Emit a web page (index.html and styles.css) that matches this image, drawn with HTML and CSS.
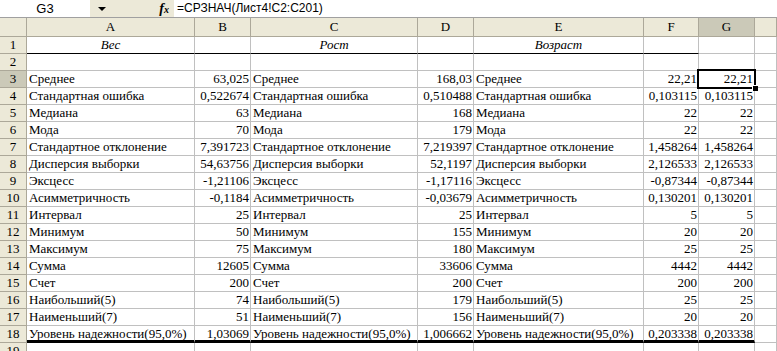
FILE: index.html
```html
<!DOCTYPE html>
<html lang="ru">
<head>
<meta charset="utf-8">
<title>Лист</title>
<link rel="stylesheet" href="styles.css">
</head>
<body>
<div class="fbar">
  <div class="namebox">G3</div>
  <div class="ddbtn"><span class="arrow"></span></div>
  <div class="fxzone"><span class="fx">f<span class="fxx">x</span></span></div>
  <div class="formula">=СРЗНАЧ(Лист4!C2:C201)</div>
</div>
<div class="sheet">
  <div class="corner"></div><div class="ch">A</div><div class="ch">B</div><div class="ch">C</div><div class="ch">D</div><div class="ch">E</div><div class="ch">F</div><div class="ch csel">G</div><div class="ch"></div>

  <div class="rh">1</div><div class="c i b1">Вес</div><div class="c b1"></div><div class="c i b1">Рост</div><div class="c b1"></div><div class="c i b1">Возраст</div><div class="c b1"></div><div class="c"></div><div class="c"></div>

  <div class="rh">2</div><div class="c"></div><div class="c"></div><div class="c"></div><div class="c"></div><div class="c"></div><div class="c"></div><div class="c"></div><div class="c"></div>

  <div class="rh rsel">3</div><div class="c">Среднее</div><div class="c n">63,025</div><div class="c">Среднее</div><div class="c n">168,03</div><div class="c">Среднее</div><div class="c n">22,21</div><div class="c n sel">22,21</div><div class="c"></div>

  <div class="rh">4</div><div class="c">Стандартная ошибка</div><div class="c n">0,522674</div><div class="c">Стандартная ошибка</div><div class="c n">0,510488</div><div class="c">Стандартная ошибка</div><div class="c n">0,103115</div><div class="c n">0,103115</div><div class="c"></div>

  <div class="rh">5</div><div class="c">Медиана</div><div class="c n">63</div><div class="c">Медиана</div><div class="c n">168</div><div class="c">Медиана</div><div class="c n">22</div><div class="c n">22</div><div class="c"></div>

  <div class="rh">6</div><div class="c">Мода</div><div class="c n">70</div><div class="c">Мода</div><div class="c n">179</div><div class="c">Мода</div><div class="c n">22</div><div class="c n">22</div><div class="c"></div>

  <div class="rh">7</div><div class="c">Стандартное отклонение</div><div class="c n">7,391723</div><div class="c">Стандартное отклонение</div><div class="c n">7,219397</div><div class="c">Стандартное отклонение</div><div class="c n">1,458264</div><div class="c n">1,458264</div><div class="c"></div>

  <div class="rh">8</div><div class="c">Дисперсия выборки</div><div class="c n">54,63756</div><div class="c">Дисперсия выборки</div><div class="c n">52,1197</div><div class="c">Дисперсия выборки</div><div class="c n">2,126533</div><div class="c n">2,126533</div><div class="c"></div>

  <div class="rh">9</div><div class="c">Эксцесс</div><div class="c n">-1,21106</div><div class="c">Эксцесс</div><div class="c n">-1,17116</div><div class="c">Эксцесс</div><div class="c n">-0,87344</div><div class="c n">-0,87344</div><div class="c"></div>

  <div class="rh">10</div><div class="c">Асимметричность</div><div class="c n">-0,1184</div><div class="c">Асимметричность</div><div class="c n">-0,03679</div><div class="c">Асимметричность</div><div class="c n">0,130201</div><div class="c n">0,130201</div><div class="c"></div>

  <div class="rh">11</div><div class="c">Интервал</div><div class="c n">25</div><div class="c">Интервал</div><div class="c n">25</div><div class="c">Интервал</div><div class="c n">5</div><div class="c n">5</div><div class="c"></div>

  <div class="rh">12</div><div class="c">Минимум</div><div class="c n">50</div><div class="c">Минимум</div><div class="c n">155</div><div class="c">Минимум</div><div class="c n">20</div><div class="c n">20</div><div class="c"></div>

  <div class="rh">13</div><div class="c">Максимум</div><div class="c n">75</div><div class="c">Максимум</div><div class="c n">180</div><div class="c">Максимум</div><div class="c n">25</div><div class="c n">25</div><div class="c"></div>

  <div class="rh">14</div><div class="c">Сумма</div><div class="c n">12605</div><div class="c">Сумма</div><div class="c n">33606</div><div class="c">Сумма</div><div class="c n">4442</div><div class="c n">4442</div><div class="c"></div>

  <div class="rh">15</div><div class="c">Счет</div><div class="c n">200</div><div class="c">Счет</div><div class="c n">200</div><div class="c">Счет</div><div class="c n">200</div><div class="c n">200</div><div class="c"></div>

  <div class="rh">16</div><div class="c">Наибольший(5)</div><div class="c n">74</div><div class="c">Наибольший(5)</div><div class="c n">179</div><div class="c">Наибольший(5)</div><div class="c n">25</div><div class="c n">25</div><div class="c"></div>

  <div class="rh">17</div><div class="c">Наименьший(7)</div><div class="c n">51</div><div class="c">Наименьший(7)</div><div class="c n">156</div><div class="c">Наименьший(7)</div><div class="c n">20</div><div class="c n">20</div><div class="c"></div>

  <div class="rh">18</div><div class="c b3">Уровень надежности(95,0%)</div><div class="c n b3">1,03069</div><div class="c b3">Уровень надежности(95,0%)</div><div class="c n b3">1,006662</div><div class="c b3">Уровень надежности(95,0%)</div><div class="c n b3">0,203338</div><div class="c n b3">0,203338</div><div class="c"></div>

  <div class="rh">19</div><div class="c"></div><div class="c"></div><div class="c"></div><div class="c"></div><div class="c"></div><div class="c"></div><div class="c"></div><div class="c"></div>
</div>
</body>
</html>
```
FILE: styles.css
```css
html, body {
  margin: 0;
  padding: 0;
  background: #ffffff;
  overflow: hidden;
}
body {
  width: 777px;
  height: 351px;
}
.fbar {
  display: flex;
  height: 17px;
  border-bottom: 1px solid #a0a0a0;
  font-family: "Liberation Sans", Arial, sans-serif;
  font-size: 13px;
  line-height: 17px;
  color: #000;
}
.namebox {
  width: 90px;
  text-align: center;
  background: #fff;
}
.ddbtn {
  width: 24px;
  background: #ece9d8;
  display: flex;
  align-items: center;
  justify-content: center;
}
.arrow {
  width: 0;
  height: 0;
  border-left: 4px solid transparent;
  border-right: 4px solid transparent;
  border-top: 4px solid #000;
  margin-top: 1px;
}
.fxzone {
  width: 55px;
  background: #ece9d8;
  display: flex;
  justify-content: flex-end;
  padding-right: 5px;
}
.fx {
  font-family: "Liberation Serif", "Times New Roman", serif;
  font-style: italic;
  font-weight: bold;
  font-size: 14px;
}
.fxx {
  font-size: 10px;
}
.formula {
  flex: 1;
  padding-left: 3px;
  background: #fff;
  white-space: nowrap;
  font-size: 12px;
}
.sheet {
  display: grid;
  grid-template-columns: 27px 168px 56px 167px 56px 170px 55px 56px 1fr;
  grid-template-rows: 19px;
  grid-auto-rows: 17px;
  font-family: "Liberation Serif", "Times New Roman", serif;
  font-size: 13px;
  line-height: 16px;
  color: #000;
}
.corner, .ch, .rh {
  background: #ece9d8;
  box-sizing: border-box;
  border-right: 1px solid #aca899;
  border-bottom: 1px solid #aca899;
  text-align: center;
  white-space: nowrap;
  overflow: hidden;
}
.ch {
  line-height: 18px;
}
.csel, .rsel {
  background: #cbc9b8;
}
.c {
  box-sizing: border-box;
  border-right: 1px solid #c0c0c0;
  border-bottom: 1px solid #c0c0c0;
  padding: 0 2px;
  white-space: nowrap;
  overflow: hidden;
}
.n {
  text-align: right;
  padding-right: 1px;
}
.i {
  font-style: italic;
  text-align: center;
}
.b1 {
  border-bottom-color: #000;
}
.b3 {
  border-bottom: 3px solid #000;
  line-height: 15px;
}
.sel {
  position: relative;
  overflow: visible;
}
.sel::after {
  content: "";
  position: absolute;
  left: -2px;
  top: -2px;
  right: -2px;
  bottom: -2px;
  border: 2px solid #000;
}
.sel::before {
  content: "";
  position: absolute;
  right: -4px;
  bottom: -4px;
  width: 5px;
  height: 5px;
  background: #000;
  border-left: 1px solid #fff;
  border-top: 1px solid #fff;
  z-index: 2;
}
```
